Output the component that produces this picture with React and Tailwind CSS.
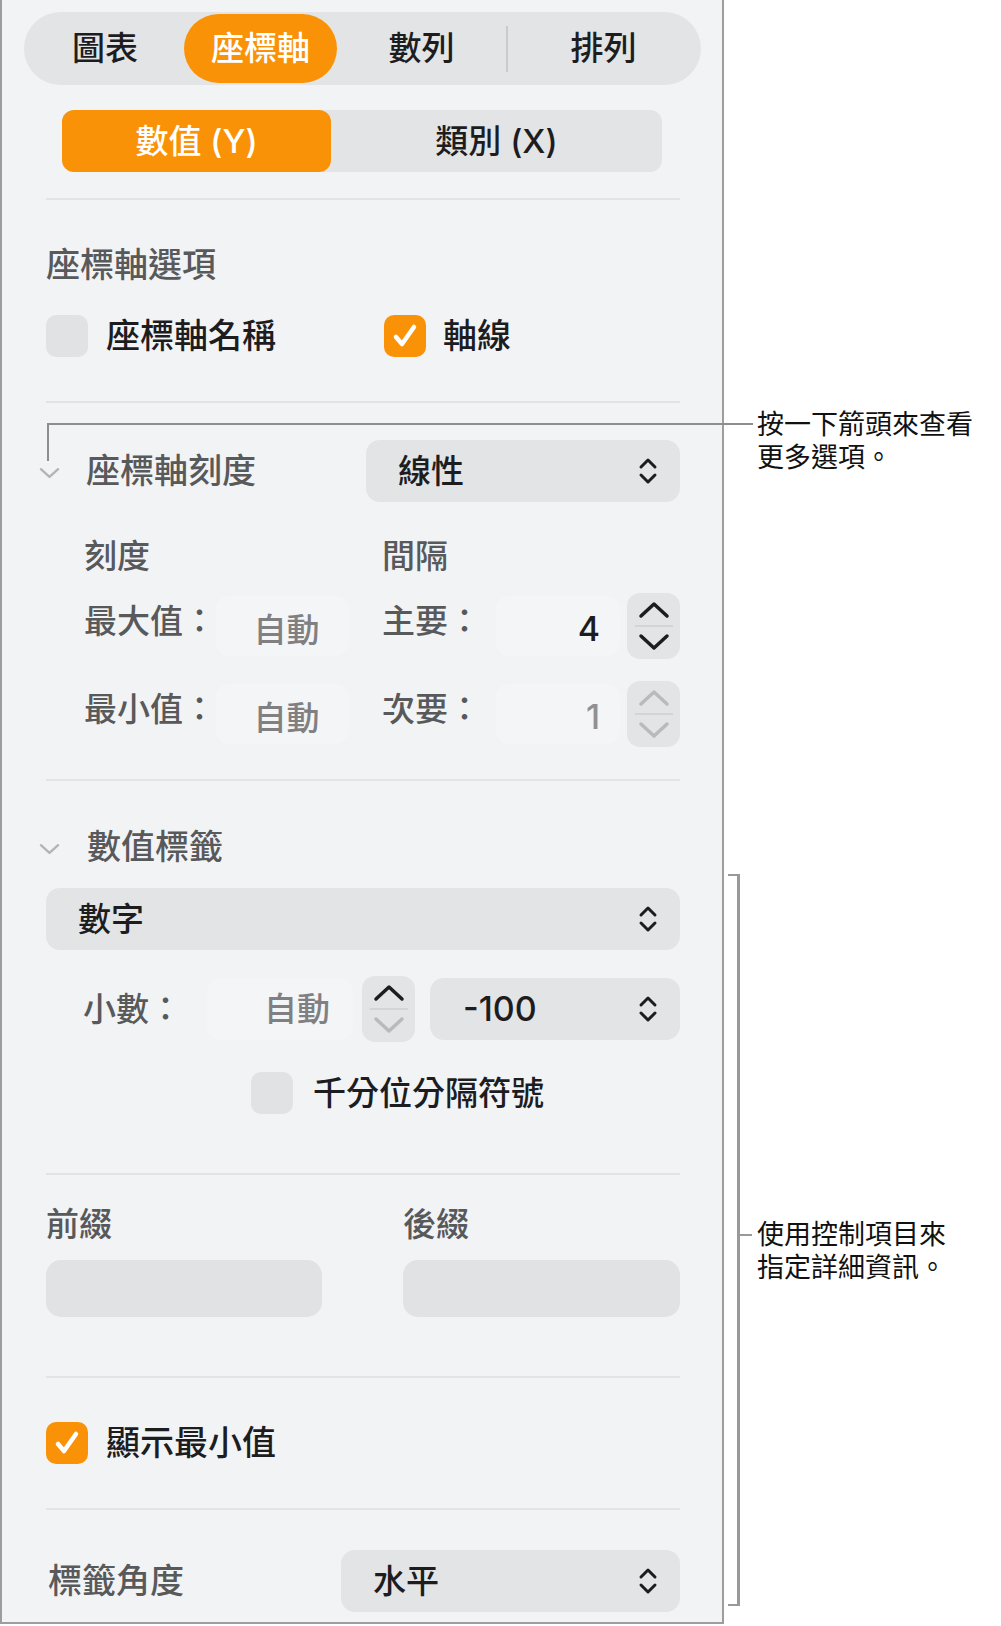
import React from "react";

const UpDown = () => (
  <svg width="22" height="30" viewBox="0 0 22 30" fill="none" stroke="#1d1d1f" strokeWidth="3" strokeLinecap="round" strokeLinejoin="round">
    <path d="M4 11 L11 4 L18 11" />
    <path d="M4 19 L11 26 L18 19" />
  </svg>
);

const Disclosure = () => (
  <svg width="22" height="12" viewBox="0 0 22 12" fill="none" stroke="#b3b4b6" strokeWidth="2.5" strokeLinecap="round" strokeLinejoin="round">
    <path d="M2 2 L11 10 L20 2" />
  </svg>
);

const Check = ({ checked }) =>
  checked ? (
    <div className="w-[42px] h-[42px] rounded-[10px] bg-[#fa9207] flex items-center justify-center shrink-0">
      <svg width="30" height="30" viewBox="0 0 30 30" fill="none" stroke="white" strokeWidth="4.5" strokeLinecap="round" strokeLinejoin="round">
        <path d="M6 16 L12 23 L24 6" />
      </svg>
    </div>
  ) : (
    <div className="w-[42px] h-[42px] rounded-[10px] bg-[#e1e2e4] shrink-0" />
  );

const Stepper = ({ upDark, downDark }) => (
  <div className="w-[53px] h-[66px] rounded-[13px] bg-[#e3e4e6] flex flex-col items-center justify-center shrink-0">
    <svg width="32" height="20" viewBox="0 0 32 20" fill="none" stroke={upDark ? "#1d1d1f" : "#b9babc"} strokeWidth="3.5" strokeLinecap="round" strokeLinejoin="round">
      <path d="M3 16 L16 4 L29 16" />
    </svg>
    <div className="w-[38px] h-[2px] bg-[#d3d4d6] my-[5px]" />
    <svg width="32" height="20" viewBox="0 0 32 20" fill="none" stroke={downDark ? "#1d1d1f" : "#b9babc"} strokeWidth="3.5" strokeLinecap="round" strokeLinejoin="round">
      <path d="M3 4 L16 16 L29 4" />
    </svg>
  </div>
);

const Sep = ({ mt }) => <div className={`h-[2px] bg-[#e2e3e5] w-[634px] ${mt}`} />;

export default function App() {
  return (
    <div className="relative w-[1001px] h-[1626px] bg-white overflow-hidden font-[Inter,'Noto_Sans_CJK_TC',sans-serif] text-[#1d1d1f]">
      <div className="w-[724px] h-[1624px] bg-[#f2f3f5] border-l-2 border-r-2 border-b-2 border-[#9d9d9d] pl-[44px] flex flex-col font-medium">
        {/* top tab bar */}
        <div className="-ml-[22px] mt-[12px] w-[677px] h-[73px] rounded-full bg-[#e3e4e6] p-[2px] flex items-center text-[33px] leading-none">
          <div className="w-[158px] h-full flex items-center justify-center">圖表</div>
          <div className="w-[153px] h-full rounded-full bg-[#fa9207] text-white flex items-center justify-center">座標軸</div>
          <div className="w-[169px] h-full flex items-center justify-center">數列</div>
          <div className="w-[2px] h-[46px] bg-[#c9cacc]" />
          <div className="flex-1 h-full flex items-center justify-center">排列</div>
        </div>

        {/* Y / X segmented */}
        <div className="ml-[16px] mt-[25px] w-[600px] h-[62px] rounded-[12px] bg-[#e3e4e6] flex text-[33px] leading-none">
          <div className="w-[269px] h-full rounded-[12px] bg-[#fa9207] text-white flex items-center justify-center">數值 (Y)</div>
          <div className="flex-1 h-full flex items-center justify-center">類別 (X)</div>
        </div>

        <Sep mt="mt-[26px]" />

        <div className="mt-[45px] h-[40px] leading-[40px] text-[34px] text-[#58595b]">座標軸選項</div>

        <div className="mt-[30px] h-[42px] flex items-center text-[34px] leading-none">
          <div className="w-[338px] flex items-center gap-[18px]">
            <Check checked={false} />
            <span>座標軸名稱</span>
          </div>
          <div className="flex items-center gap-[17px]">
            <Check checked={true} />
            <span>軸線</span>
          </div>
        </div>

        <Sep mt="mt-[44px]" />

        <div className="mt-[37px] h-[62px] flex items-center w-[634px]">
          <div className="-ml-[7px] w-[21px] flex items-center pt-[4px]">
            <Disclosure />
          </div>
          <div className="ml-[26px] text-[34px] leading-none text-[#58595b] w-[280px]">座標軸刻度</div>
          <div className="flex-1 h-[62px] rounded-[14px] bg-[#e3e4e6] flex items-center justify-between pl-[32px] pr-[21px] text-[33px] leading-none">
            <span>線性</span>
            <UpDown />
          </div>
        </div>

        <div className="mt-[34px] h-[40px] pl-[38px] flex items-center text-[33px] leading-none text-[#58595b]">
          <div className="w-[298px]">刻度</div>
          <div>間隔</div>
        </div>

        <div className="mt-[17px] h-[66px] pl-[38px] flex items-center text-[33px] leading-none whitespace-nowrap">
          <div className="w-[132px] shrink-0 text-[#58595b] pb-[10px]">最大值：</div>
          <div className="w-[133px] shrink-0 h-[60px] rounded-[14px] bg-[#f4f5f7] flex items-center justify-center text-[#808082] pl-[8px] pt-[8px]">自動</div>
          <div className="w-[33px] shrink-0" />
          <div className="w-[114px] shrink-0 text-[#58595b] pb-[10px]">主要：</div>
          <div className="w-[124px] shrink-0 h-[60px] rounded-[14px] bg-[#f4f5f7] flex items-center justify-end pr-[20px] pt-[6px] text-[34px]">4</div>
          <div className="ml-[7px]">
            <Stepper upDark downDark />
          </div>
        </div>

        <div className="mt-[22px] h-[66px] pl-[38px] flex items-center text-[33px] leading-none whitespace-nowrap">
          <div className="w-[132px] shrink-0 text-[#58595b] pb-[10px]">最小值：</div>
          <div className="w-[133px] shrink-0 h-[60px] rounded-[14px] bg-[#f4f5f7] flex items-center justify-center text-[#808082] pl-[8px] pt-[8px]">自動</div>
          <div className="w-[33px] shrink-0" />
          <div className="w-[114px] shrink-0 text-[#58595b] pb-[10px]">次要：</div>
          <div className="w-[124px] shrink-0 h-[60px] rounded-[14px] bg-[#f4f5f7] flex items-center justify-end pr-[20px] pt-[6px] text-[34px] text-[#909092]">1</div>
          <div className="ml-[7px]">
            <Stepper upDark={false} downDark={false} />
          </div>
        </div>

        <Sep mt="mt-[32px]" />

        <div className="mt-[46px] h-[40px] flex items-center">
          <div className="-ml-[7px] w-[21px] flex items-center pt-[4px]">
            <Disclosure />
          </div>
          <div className="ml-[27px] text-[34px] leading-none text-[#58595b]">數值標籤</div>
        </div>

        <div className="mt-[21px] w-[634px] h-[62px] rounded-[14px] bg-[#e3e4e6] flex items-center justify-between pl-[32px] pr-[21px] text-[33px] leading-none">
          <span>數字</span>
          <UpDown />
        </div>

        <div className="mt-[26px] h-[66px] pl-[37px] flex items-center w-[634px] text-[33px] leading-none whitespace-nowrap">
          <div className="w-[124px] shrink-0 text-[#58595b]">小數：</div>
          <div className="w-[146px] shrink-0 h-[62px] rounded-[14px] bg-[#f4f5f7] flex items-center justify-end pr-[23px] text-[#808082]">自動</div>
          <div className="ml-[9px]">
            <Stepper upDark downDark={false} />
          </div>
          <div className="ml-[15px] flex-1 h-[62px] rounded-[14px] bg-[#e3e4e6] flex items-center justify-between pl-[33px] pr-[21px] text-[34px]">
            <span>-100</span>
            <UpDown />
          </div>
        </div>

        <div className="mt-[30px] h-[42px] pl-[205px] flex items-center gap-[20px] text-[33px] leading-none">
          <Check checked={false} />
          <span>千分位分隔符號</span>
        </div>

        <Sep mt="mt-[59px]" />

        <div className="mt-[29px] h-[40px] flex items-center text-[33px] leading-none text-[#58595b]">
          <div className="w-[357px]">前綴</div>
          <div>後綴</div>
        </div>

        <div className="mt-[16px] h-[57px] flex w-[634px]">
          <div className="w-[276px] h-full rounded-[15px] bg-[#e1e2e4]" />
          <div className="ml-[81px] flex-1 h-full rounded-[15px] bg-[#e1e2e4]" />
        </div>

        <Sep mt="mt-[59px]" />

        <div className="mt-[44px] h-[42px] flex items-center gap-[18px] text-[34px] leading-none">
          <Check checked={true} />
          <span>顯示最小值</span>
        </div>

        <Sep mt="mt-[44px]" />

        <div className="mt-[40px] h-[62px] flex items-center w-[634px]">
          <div className="w-[295px] pl-[2px] text-[34px] leading-none text-[#58595b]">標籤角度</div>
          <div className="flex-1 h-[62px] rounded-[14px] bg-[#e3e4e6] flex items-center justify-between pl-[32px] pr-[21px] text-[33px] leading-none">
            <span>水平</span>
            <UpDown />
          </div>
        </div>
      </div>

      {/* callout 1 */}
      <div className="absolute left-[47px] top-[423px] w-[706px] h-[2px] bg-[#8e8e8e]" />
      <div className="absolute left-[47px] top-[423px] w-[2px] h-[38px] bg-[#8e8e8e]" />
      <div className="absolute left-[757px] top-[408px] text-[27px] leading-[33px] text-[#111]">
        <div>按一下箭頭來查看</div>
        <div>更多選項。</div>
      </div>

      {/* bracket callout 2 */}
      <div className="absolute left-[737px] top-[874px] w-[3px] h-[732px] bg-[#999]" />
      <div className="absolute left-[728px] top-[874px] w-[10px] h-[2px] bg-[#999]" />
      <div className="absolute left-[728px] top-[1604px] w-[10px] h-[2px] bg-[#999]" />
      <div className="absolute left-[740px] top-[1234px] w-[12px] h-[2px] bg-[#999]" />
      <div className="absolute left-[757px] top-[1218px] text-[27px] leading-[33px] text-[#111]">
        <div>使用控制項目來</div>
        <div>指定詳細資訊。</div>
      </div>
    </div>
  );
}
